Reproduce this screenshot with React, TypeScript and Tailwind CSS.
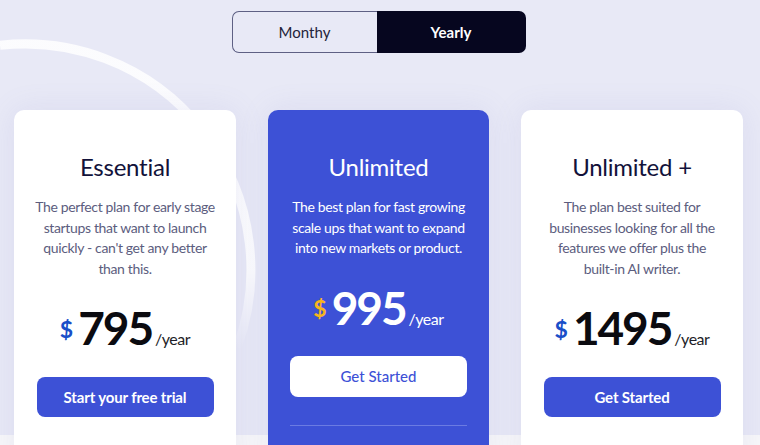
import React from "react";

type Plan = {
  name: string;
  desc: string[];
  price: string;
  cta: string;
  featured?: boolean;
};

const plans: Plan[] = [
  {
    name: "Essential",
    desc: [
      "The perfect plan for early stage",
      "startups that want to launch",
      "quickly - can't get any better",
      "than this.",
    ],
    price: "795",
    cta: "Start your free trial",
  },
  {
    name: "Unlimited",
    desc: [
      "The best plan for fast growing",
      "scale ups that want to expand",
      "into new markets or product.",
    ],
    price: "995",
    cta: "Get Started",
    featured: true,
  },
  {
    name: "Unlimited +",
    desc: [
      "The plan best suited for",
      "businesses looking for all the",
      "features we offer plus the",
      "built-in AI writer.",
    ],
    price: "1495",
    cta: "Get Started",
  },
];

function Card({ plan }: { plan: Plan }) {
  const f = plan.featured;
  return (
    <div
      className={
        f
          ? "w-[221px] h-[360px] shrink-0 rounded-[10px] bg-[#3d51d6] flex flex-col items-center pt-[41px] px-[10px] shadow-[0_0_30px_rgba(120,125,200,0.12)]"
          : "w-[222px] h-[360px] shrink-0 rounded-[10px] bg-white flex flex-col items-center pt-[41px] px-[10px] shadow-[0_0_30px_rgba(120,125,200,0.12)]"
      }
    >
      <h2
        className={
          f
            ? "text-[24px] leading-[32px] text-white tracking-[-0.01em]"
            : "text-[24px] leading-[32px] text-[#12123a] tracking-[-0.01em]"
        }
      >
        {plan.name}
      </h2>
      <p
        className={
          f
            ? "mt-[14px] text-center text-[14px] leading-[20.7px] text-white tracking-[-0.025em]"
            : "mt-[14px] text-center text-[14px] leading-[20.7px] text-[#5c5d7e] tracking-[-0.025em]"
        }
      >
        {plan.desc.map((l, i) => (
          <span key={i} className="block whitespace-nowrap">
            {l}
          </span>
        ))}
      </p>
      <div className="mt-[27px] flex items-center h-[44px]">
        <span
          className={
            f
              ? "text-[23px] font-bold text-[#f6b51e] mr-[5px] mt-[1px]"
              : "text-[23px] font-bold text-[#1a4fc8] mr-[5px] mt-[1px]"
          }
        >
          $
        </span>
        <span className="flex items-baseline">
          <span
            className={
              f
                ? "text-[46px] leading-[44px] font-bold text-white tracking-[-0.045em]"
                : "text-[46px] leading-[44px] font-bold text-[#0b0b10] tracking-[-0.045em]"
            }
          >
            {plan.price}
          </span>
          <span
            className={
              f
                ? "ml-[3px] text-[16px] text-white tracking-[-0.03em]"
                : "ml-[3px] text-[16px] text-[#1e1e28] tracking-[-0.03em]"
            }
          >
            /year
          </span>
        </span>
      </div>
      <button
        className={
          f
            ? "mt-[26px] w-[177px] h-[41px] rounded-[8px] bg-white text-[#3d51d6] text-[15px] font-medium"
            : "mt-[26px] w-[177px] h-[40px] rounded-[8px] bg-[#3d51d6] text-white text-[15px] font-bold tracking-[-0.01em]"
        }
      >
        {plan.cta}
      </button>
      {f && <div className="mt-[28px] w-[177px] h-[1px] bg-[#6b7be2]" />}
    </div>
  );
}

export default function App() {
  return (
    <div
      className="relative w-[760px] h-[445px] overflow-hidden bg-[#e8e9f6]"
      style={{ fontFamily: "Lato, 'Noto Sans', sans-serif" }}
    >
      <div className="absolute left-0 right-0 bottom-0 h-[10px] bg-[#f7f7f9]" />
      <svg
        className="absolute left-0 top-0"
        width="300"
        height="400"
        viewBox="0 0 300 400"
      >
        <defs>
          <linearGradient id="fade" x1="0" y1="270" x2="0" y2="350" gradientUnits="userSpaceOnUse">
            <stop offset="0" stopColor="#ffffff" stopOpacity="0.85" />
            <stop offset="1" stopColor="#ffffff" stopOpacity="0" />
          </linearGradient>
        </defs>
        <path
          d="M 0 45.3 A 226 226 0 0 1 237 348"
          fill="none"
          stroke="url(#fade)"
          strokeWidth="9"
        />
      </svg>
      <div className="relative flex justify-center pt-[11px] pr-[3px]">
        <div className="flex h-[42px]">
          <button className="w-[145px] h-full rounded-l-[7px] border border-r-0 border-[#5e6084] text-[15px] text-[#23233a]">
            Monthy
          </button>
          <button className="w-[149px] h-full rounded-r-[7px] bg-[#06061f] text-[15px] font-bold text-white">
            Yearly
          </button>
        </div>
      </div>
      <div className="relative flex gap-[32px] pl-[14px] mt-[57px]">
        {plans.map((p) => (
          <Card key={p.name} plan={p} />
        ))}
      </div>
    </div>
  );
}
